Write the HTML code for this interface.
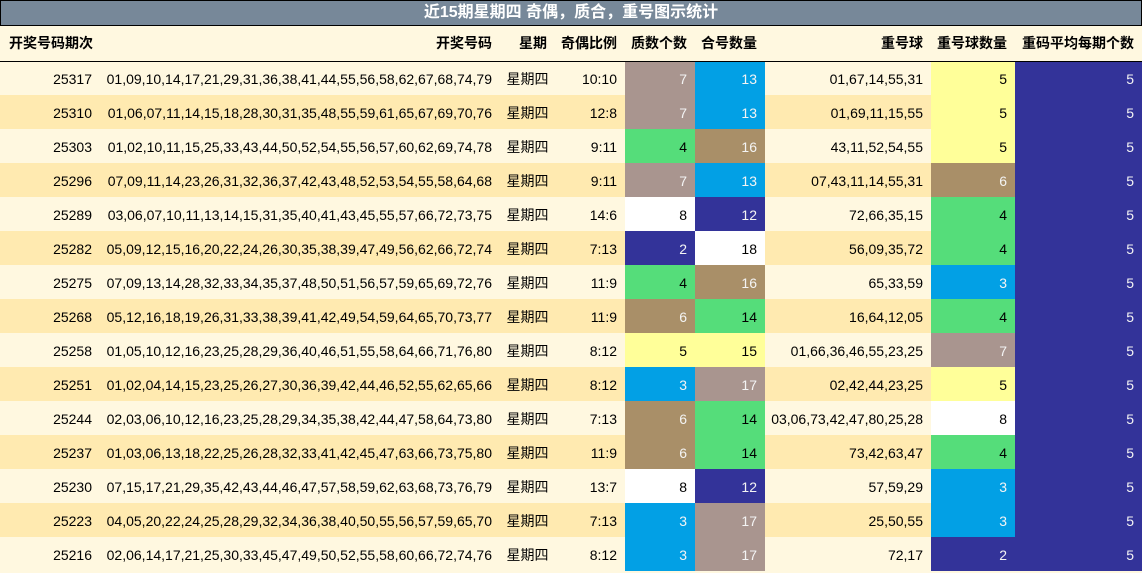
<!DOCTYPE html>
<html><head><meta charset="utf-8"><style>
*{margin:0;padding:0;box-sizing:border-box}
body{width:1142px;height:573px;overflow:hidden;background:#fff8e0;font-family:"Liberation Sans","Noto Sans CJK SC",sans-serif;font-size:14px;color:#000}
.title{position:absolute;left:0;top:0;width:1142px;height:26px;background:#778899;border:1px solid #000;color:#fff;font-weight:bold;font-size:16px;text-align:center;line-height:24px}
table{position:absolute;left:0;top:26px;border-collapse:collapse;table-layout:fixed;width:1142px}
td{height:34px;padding:2px 8px 0 0;text-align:right;white-space:nowrap;overflow:hidden}
tr.h td{height:35px;padding-top:0;font-weight:bold;border-bottom:1px solid #000;background:#fff8e0}
tr.h td:first-child{text-align:left;padding-left:9px}
tr.a td{background:#fff8e0}
tr.b td{background:#ffeab0}
td.c{text-align:center;padding:2px 0 0 0}
tr td.B{background:#a9958f;color:#f4f4f4}
tr td.L{background:#02a0e5;color:#f4f4f4}
tr td.G{background:#55dd7a}
tr td.T{background:#a98f68;color:#f4f4f4}
tr td.N{background:#333399;color:#f4f4f4}
tr td.Y{background:#ffff99}
tr td.W{background:#fff}
</style></head><body>
<div class="title">近15期星期四 奇偶，质合，重号图示统计</div>
<table>
<colgroup><col style="width:100px"><col style="width:400px"><col style="width:55px"><col style="width:70px"><col style="width:70px"><col style="width:70px"><col style="width:166px"><col style="width:84px"><col style="width:127px"></colgroup>
<tr class="h"><td>开奖号码期次</td><td>开奖号码</td><td>星期</td><td>奇偶比例</td><td>质数个数</td><td>合号数量</td><td>重号球</td><td>重号球数量</td><td>重码平均每期个数</td></tr>
<tr class="a"><td>25317</td><td>01,09,10,14,17,21,29,31,36,38,41,44,55,56,58,62,67,68,74,79</td><td class="c">星期四</td><td>10:10</td><td class="B">7</td><td class="L">13</td><td>01,67,14,55,31</td><td class="Y">5</td><td class="N">5</td></tr>
<tr class="b"><td>25310</td><td>01,06,07,11,14,15,18,28,30,31,35,48,55,59,61,65,67,69,70,76</td><td class="c">星期四</td><td>12:8</td><td class="B">7</td><td class="L">13</td><td>01,69,11,15,55</td><td class="Y">5</td><td class="N">5</td></tr>
<tr class="a"><td>25303</td><td>01,02,10,11,15,25,33,43,44,50,52,54,55,56,57,60,62,69,74,78</td><td class="c">星期四</td><td>9:11</td><td class="G">4</td><td class="T">16</td><td>43,11,52,54,55</td><td class="Y">5</td><td class="N">5</td></tr>
<tr class="b"><td>25296</td><td>07,09,11,14,23,26,31,32,36,37,42,43,48,52,53,54,55,58,64,68</td><td class="c">星期四</td><td>9:11</td><td class="B">7</td><td class="L">13</td><td>07,43,11,14,55,31</td><td class="T">6</td><td class="N">5</td></tr>
<tr class="a"><td>25289</td><td>03,06,07,10,11,13,14,15,31,35,40,41,43,45,55,57,66,72,73,75</td><td class="c">星期四</td><td>14:6</td><td class="W">8</td><td class="N">12</td><td>72,66,35,15</td><td class="G">4</td><td class="N">5</td></tr>
<tr class="b"><td>25282</td><td>05,09,12,15,16,20,22,24,26,30,35,38,39,47,49,56,62,66,72,74</td><td class="c">星期四</td><td>7:13</td><td class="N">2</td><td class="W">18</td><td>56,09,35,72</td><td class="G">4</td><td class="N">5</td></tr>
<tr class="a"><td>25275</td><td>07,09,13,14,28,32,33,34,35,37,48,50,51,56,57,59,65,69,72,76</td><td class="c">星期四</td><td>11:9</td><td class="G">4</td><td class="T">16</td><td>65,33,59</td><td class="L">3</td><td class="N">5</td></tr>
<tr class="b"><td>25268</td><td>05,12,16,18,19,26,31,33,38,39,41,42,49,54,59,64,65,70,73,77</td><td class="c">星期四</td><td>11:9</td><td class="T">6</td><td class="G">14</td><td>16,64,12,05</td><td class="G">4</td><td class="N">5</td></tr>
<tr class="a"><td>25258</td><td>01,05,10,12,16,23,25,28,29,36,40,46,51,55,58,64,66,71,76,80</td><td class="c">星期四</td><td>8:12</td><td class="Y">5</td><td class="Y">15</td><td>01,66,36,46,55,23,25</td><td class="B">7</td><td class="N">5</td></tr>
<tr class="b"><td>25251</td><td>01,02,04,14,15,23,25,26,27,30,36,39,42,44,46,52,55,62,65,66</td><td class="c">星期四</td><td>8:12</td><td class="L">3</td><td class="B">17</td><td>02,42,44,23,25</td><td class="Y">5</td><td class="N">5</td></tr>
<tr class="a"><td>25244</td><td>02,03,06,10,12,16,23,25,28,29,34,35,38,42,44,47,58,64,73,80</td><td class="c">星期四</td><td>7:13</td><td class="T">6</td><td class="G">14</td><td>03,06,73,42,47,80,25,28</td><td class="W">8</td><td class="N">5</td></tr>
<tr class="b"><td>25237</td><td>01,03,06,13,18,22,25,26,28,32,33,41,42,45,47,63,66,73,75,80</td><td class="c">星期四</td><td>11:9</td><td class="T">6</td><td class="G">14</td><td>73,42,63,47</td><td class="G">4</td><td class="N">5</td></tr>
<tr class="a"><td>25230</td><td>07,15,17,21,29,35,42,43,44,46,47,57,58,59,62,63,68,73,76,79</td><td class="c">星期四</td><td>13:7</td><td class="W">8</td><td class="N">12</td><td>57,59,29</td><td class="L">3</td><td class="N">5</td></tr>
<tr class="b"><td>25223</td><td>04,05,20,22,24,25,28,29,32,34,36,38,40,50,55,56,57,59,65,70</td><td class="c">星期四</td><td>7:13</td><td class="L">3</td><td class="B">17</td><td>25,50,55</td><td class="L">3</td><td class="N">5</td></tr>
<tr class="a"><td>25216</td><td>02,06,14,17,21,25,30,33,45,47,49,50,52,55,58,60,66,72,74,76</td><td class="c">星期四</td><td>8:12</td><td class="L">3</td><td class="B">17</td><td>72,17</td><td class="N">2</td><td class="N">5</td></tr>
</table>
</body></html>
